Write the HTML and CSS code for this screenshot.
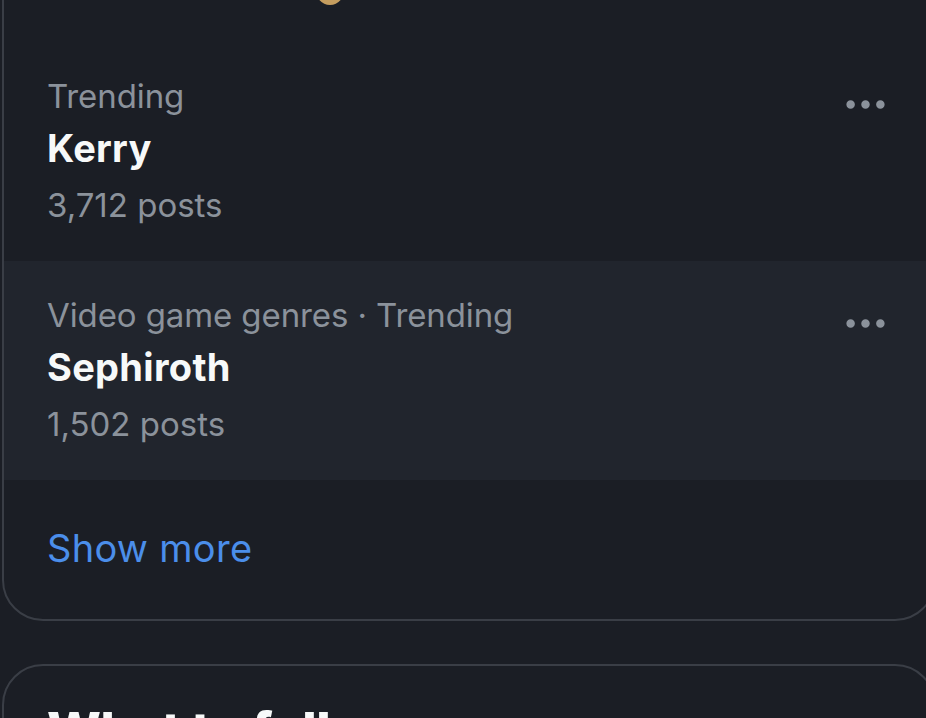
FILE: index.html
```html
<!DOCTYPE html>
<html>
<head>
	<meta charset="UTF-8">
	<title>Trends</title>
	<link rel="stylesheet" href="styles.css">
</head>
<body>
	<div class="card trends">
		<div class="card-top">
			<span class="badge"></span>
		</div>
		<div class="trend">
			<div class="trend-info">
				<span class="meta">Trending</span>
				<span class="name">Kerry</span>
				<span class="count">3,712 posts</span>
			</div>
			<svg class="more" viewBox="0 0 24 24"><path d="M3 12c0-1.1.9-2 2-2s2 .9 2 2-.9 2-2 2-2-.9-2-2zm9 2c1.1 0 2-.9 2-2s-.9-2-2-2-2 .9-2 2 .9 2 2 2zm7 0c1.1 0 2-.9 2-2s-.9-2-2-2-2 .9-2 2 .9 2 2 2z"></path></svg>
		</div>
		<div class="trend hover">
			<div class="trend-info">
				<span class="meta">Video game genres · Trending</span>
				<span class="name">Sephiroth</span>
				<span class="count">1,502 posts</span>
			</div>
			<svg class="more" viewBox="0 0 24 24"><path d="M3 12c0-1.1.9-2 2-2s2 .9 2 2-.9 2-2 2-2-.9-2-2zm9 2c1.1 0 2-.9 2-2s-.9-2-2-2-2 .9-2 2 .9 2 2 2zm7 0c1.1 0 2-.9 2-2s-.9-2-2-2-2 .9-2 2 .9 2 2 2z"></path></svg>
		</div>
		<a class="show-more">Show more</a>
	</div>
	<div class="card follow">
		<h2>What to follow</h2>
	</div>
</body>
</html>
```

FILE: styles.css
```css
*{margin: 0;padding: 0;box-sizing: border-box;}
html,body{height: 100%;overflow: hidden;}
body{background: #1b1e25;font-family: Inter, "Noto Sans", sans-serif;color: #e7e9ea;}

.card{border: 2px solid #3a3e46;border-radius: 41px;margin: 0 -10px 0 2px;overflow: hidden;}
.trends{margin-top: -60px;}
.card-top{height: 100px;padding: 29px 0 0 311px;}
.badge{display: block;width: 30px;height: 34px;border-radius: 50%;background: #c59d5f;}

.trend{display: flex;justify-content: space-between;align-items: flex-start;height: 219px;padding: 34px 43px 0 43px;}
.trend.hover{background: #21252d;}
.trend-info{display: flex;flex-direction: column;}
.meta{font-size: 33px;line-height: 40px;color: #8b929b;letter-spacing: -0.1px;}
.name{font-size: 38px;line-height: 48px;font-weight: 700;color: #f7f9f9;margin-top: 8px;letter-spacing: 0.3px;}
.count{font-size: 33px;line-height: 40px;color: #8b929b;margin-top: 13px;}
.more{width: 51px;height: 51px;fill: #8b929b;margin-top: 3px;}

.show-more{display: block;padding: 44px 43px 47px;font-size: 38px;line-height: 48px;color: #4b8eea;letter-spacing: 0.3px;}

.follow{margin-top: 43px;padding: 34px 43px 0;height: 300px;}
.follow h2{font-size: 51px;line-height: 61px;font-weight: 800;color: #f7f9f9;letter-spacing: -0.5px;}
```
